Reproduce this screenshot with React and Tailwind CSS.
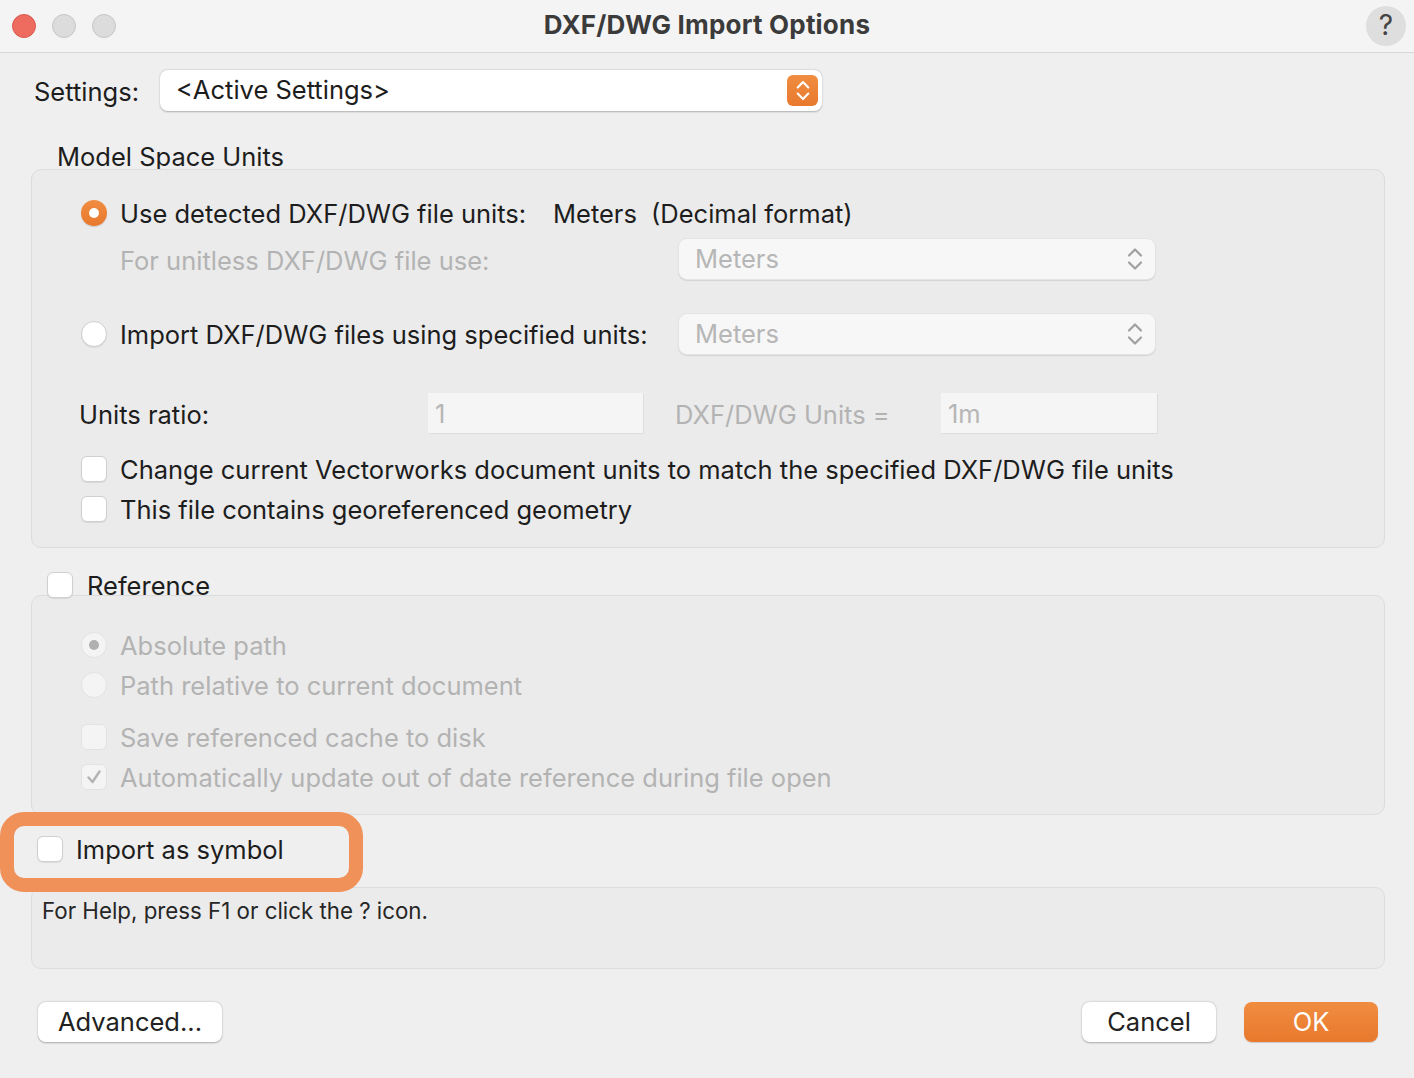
import React from "react";

const font = { fontFamily: "Inter, 'Noto Sans', sans-serif" };

const Stepper = ({ color = "#9a9a9a", w = 18, h = 26, sw = 2.2 }) => (
  <svg width={w} height={h} viewBox="0 0 18 26" fill="none">
    <path d="M3 9.5 L9 3.5 L15 9.5" stroke={color} strokeWidth={sw} strokeLinecap="round" strokeLinejoin="round" />
    <path d="M3 16.5 L9 22.5 L15 16.5" stroke={color} strokeWidth={sw} strokeLinecap="round" strokeLinejoin="round" />
  </svg>
);

const Checkbox = ({ disabled, checked }) => (
  <span
    className={`relative z-10 inline-flex h-[26px] w-[26px] shrink-0 items-center justify-center rounded-[6px] border ${
      disabled ? "border-[#e2e2e2] bg-[#f4f4f4]" : "border-[#cfcfcf] bg-white shadow-[0_1px_1px_rgba(0,0,0,0.08)]"
    }`}
  >
    {checked && (
      <svg width="18" height="18" viewBox="0 0 18 18" fill="none">
        <path d="M3.5 9.5 L7.5 14 L14.5 3.5" stroke="#b3b3b3" strokeWidth="2.4" strokeLinecap="round" strokeLinejoin="round" />
      </svg>
    )}
  </span>
);

const Radio = ({ selected, disabled, dot }) => {
  if (selected) {
    return (
      <span className="inline-flex h-[26px] w-[26px] shrink-0 items-center justify-center rounded-full bg-gradient-to-b from-[#f08d42] to-[#e8792c] shadow-[0_1px_1px_rgba(0,0,0,0.15)]">
        <span className="h-[10px] w-[10px] rounded-full bg-white" />
      </span>
    );
  }
  return (
    <span
      className={`inline-flex h-[26px] w-[26px] shrink-0 items-center justify-center rounded-full border ${
        disabled ? "border-[#e3e3e3] bg-[#f4f4f4]" : "border-[#cfcfcf] bg-white shadow-[0_1px_1px_rgba(0,0,0,0.08)]"
      }`}
    >
      {dot && <span className="h-[10px] w-[10px] rounded-full bg-[#b0b0b0]" />}
    </span>
  );
};

const DisabledSelect = ({ value }) => (
  <div className="flex h-[42px] w-[478px] items-center justify-between rounded-[9px] border border-[#e4e4e4] bg-[#f7f7f7] pl-[16px] pr-[11px] text-[25.5px] text-[#b6b6b6] shadow-[0_1px_1px_rgba(0,0,0,0.1)]">
    <span>{value}</span>
    <Stepper color="#a0a0a0" />
  </div>
);

const DisabledInput = ({ value, w }) => (
  <div
    className={`flex h-[40px] ${w} items-center bg-[#f5f5f5] pl-[7px] pt-[3px] text-[25.5px] text-[#b6b6b6] shadow-[1px_1px_0_rgba(0,0,0,0.06)]`}
  >
    {value}
  </div>
);

const Button = ({ children, w, primary }) => (
  <button
    className={`flex h-[40px] ${w} items-center justify-center rounded-[8px] text-[25.5px] ${
      primary
        ? "bg-gradient-to-b from-[#f08d40] to-[#e8792d] text-white shadow-[0_1px_1px_rgba(0,0,0,0.15)]"
        : "bg-white text-[#222] shadow-[0_0.5px_2px_rgba(0,0,0,0.3)]"
    }`}
  >
    {children}
  </button>
);

export default function App() {
  return (
    <div style={font} className="flex h-[1078px] w-[1414px] flex-col overflow-hidden bg-[#efefef] text-[#1d1d1d]">
      {/* title bar */}
      <div className="grid h-[53px] shrink-0 grid-cols-[1fr_auto_1fr] items-center border-b border-[#d6d6d6] bg-[#f4f4f4]">
        <div className="flex items-center gap-[16px] pl-[12px]">
          <span className="h-[24px] w-[24px] rounded-full border border-[#d8594e] bg-[#ee6b60]" />
          <span className="h-[24px] w-[24px] rounded-full border border-[#c6c6c6] bg-[#dcdcdc]" />
          <span className="h-[24px] w-[24px] rounded-full border border-[#c6c6c6] bg-[#dcdcdc]" />
        </div>
        <div className="pb-[3px] text-[26px] font-bold tracking-[0.2px] text-[#3b3b3b]">DXF/DWG Import Options</div>
        <div className="flex justify-end pr-[8px]">
          <span className="flex h-[40px] w-[40px] items-center justify-center rounded-full bg-[#dedede] pb-[3px] text-[28px] text-[#444]">
            ?
          </span>
        </div>
      </div>

      {/* settings */}
      <div className="mt-[17px] flex h-[41px] items-center">
        <span className="w-[160px] pl-[34px] pt-[4px] text-[25.5px]">Settings:</span>
        <div className="flex h-[41px] w-[662px] items-center justify-between rounded-[8px] bg-white pl-[16px] pr-[4px] text-[25.5px] shadow-[0_0.5px_2px_rgba(0,0,0,0.28)]">
          <span>&lt;Active Settings&gt;</span>
          <span className="flex h-[31px] w-[31px] items-center justify-center rounded-[6px] bg-gradient-to-b from-[#f08d40] to-[#e8792d]">
            <Stepper color="#ffffff" w={16} h={23} sw={2.4} />
          </span>
        </div>
      </div>

      <div className="mt-[30px] h-[28px] pl-[57px] pt-[2px] text-[25.5px] leading-[28px]">Model Space Units</div>

      {/* model space units group */}
      <div className="ml-[31px] flex h-[379px] w-[1354px] flex-col rounded-[10px] border border-[#dcdcdc] bg-[#ebebeb] pl-[49px] pt-[23px]">
        <div className="flex h-[40px] items-center text-[25.5px]">
          <Radio selected />
          <span className="ml-[13px] w-[433px] pt-[2px]">Use detected DXF/DWG file units:</span>
          <span className="w-[98px] pt-[2px]">Meters</span>
          <span className="pt-[2px]">(Decimal format)</span>
        </div>
        <div className="mt-[5px] flex h-[42px] items-center text-[25.5px]">
          <span className="ml-[39px] w-[558px] pt-[5px] text-[#b3b3b3]">For unitless DXF/DWG file use:</span>
          <DisabledSelect value="Meters" />
        </div>
        <div className="mt-[33px] flex h-[42px] items-center text-[25.5px]">
          <Radio />
          <span className="ml-[13px] w-[558px] pt-[3px]">Import DXF/DWG files using specified units:</span>
          <DisabledSelect value="Meters" />
        </div>
        <div className="mt-[38px] flex h-[40px] items-center text-[25.5px]">
          <span className="-ml-[2px] w-[349px] pt-[4px]">Units ratio:</span>
          <DisabledInput value="1" w="w-[215px]" />
          <span className="ml-[32px] w-[266px] pt-[4px] text-[#b3b3b3]">DXF/DWG Units =</span>
          <DisabledInput value="1m" w="w-[216px]" />
        </div>
        <div className="mt-[16px] flex h-[40px] items-center text-[25.5px]">
          <Checkbox />
          <span className="ml-[13px] pt-[2px]">Change current Vectorworks document units to match the specified DXF/DWG file units</span>
        </div>
        <div className="flex h-[40px] items-center text-[25.5px]">
          <Checkbox />
          <span className="ml-[13px] pt-[2px]">This file contains georeferenced geometry</span>
        </div>
      </div>

      {/* reference */}
      <div className="relative z-10 mt-[17px] flex h-[40px] items-center pl-[47px] text-[25.5px]">
        <Checkbox />
        <span className="ml-[14px] pt-[2px]">Reference</span>
      </div>
      <div className="-mt-[10px] ml-[31px] flex h-[220px] w-[1354px] flex-col rounded-[10px] border border-[#dcdcdc] bg-[#ebebeb] pl-[49px] pt-[29px] text-[25.5px] text-[#b3b3b3]">
        <div className="flex h-[40px] items-center">
          <Radio disabled dot />
          <span className="ml-[13px] pt-[2px]">Absolute path</span>
        </div>
        <div className="flex h-[40px] items-center">
          <Radio disabled />
          <span className="ml-[13px] pt-[2px]">Path relative to current document</span>
        </div>
        <div className="mt-[12px] flex h-[40px] items-center">
          <Checkbox disabled />
          <span className="ml-[13px] pt-[2px]">Save referenced cache to disk</span>
        </div>
        <div className="flex h-[40px] items-center">
          <Checkbox disabled checked />
          <span className="ml-[13px] pt-[2px]">Automatically update out of date reference during file open</span>
        </div>
      </div>

      {/* import as symbol */}
      <div className="relative z-20 mt-[14px] flex h-[40px] items-center pl-[37px] text-[25.5px]">
        <Checkbox />
        <span className="ml-[13px] pt-[2px]">Import as symbol</span>
        <span className="pointer-events-none absolute left-0 top-[-17px] h-[80px] w-[363px] rounded-[24px] border-[14px] border-[#f0915a]" />
      </div>

      {/* help */}
      <div className="mt-[18px] ml-[31px] h-[82px] w-[1354px] rounded-[10px] border border-[#dcdcdc] bg-[#ebebeb] pl-[10px] pt-[6px] text-[22.3px] text-[#262626]">
        For Help, press F1 or click the ? icon.
      </div>

      {/* buttons */}
      <div className="mt-[33px] flex items-center pl-[38px] pr-[36px]">
        <Button w="w-[184px]">Advanced...</Button>
        <div className="flex-1" />
        <Button w="w-[134px]">Cancel</Button>
        <div className="w-[28px]" />
        <Button w="w-[134px]" primary>
          OK
        </Button>
      </div>
    </div>
  );
}
